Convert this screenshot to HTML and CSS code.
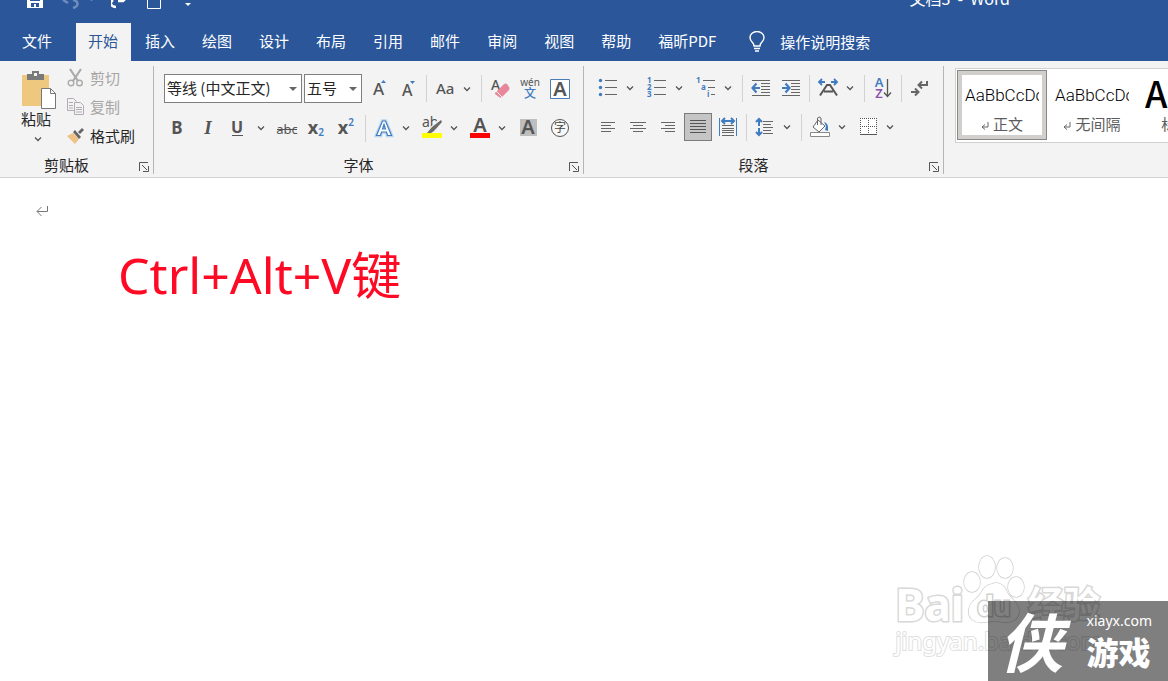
FILE: index.html
```html
<!DOCTYPE html>
<html lang="zh-CN">
<head>
<meta charset="utf-8">
<title>文档3 - Word</title>
<link rel="stylesheet" href="styles.css">
</head>
<body>
<svg class="defs" aria-hidden="true">
  <symbol id="chev" viewBox="0 0 16 28"><path d="M5 12.500l3 3 3-3" fill="none" stroke="#555" stroke-width="1.300"/></symbol>
  <symbol id="launch" viewBox="0 0 10 10"><path d="M.5 9V.5H9M3 3l5 5M9.500 4v5.500H4" fill="none" stroke="#555"/></symbol>
</svg>

<header class="titlebar">
  <div class="quick">
    <button aria-label="保存"><svg width="18" height="12"><path d="M0 0h16v8H0z" fill="#fff"/><path d="M3 0h10v1H3zM4 3h8v4H4z" fill="#2b579a"/><path d="M7 4h2v3H7z" fill="#fff"/></svg></button>
    <button aria-label="撤消"><svg width="34" height="12"><path d="M2 0l5 3M12 0c6 1 6 6 0 8" fill="none" stroke="#6d8dbf" stroke-width="2.500"/><path d="M29 0h3l-1.500 1z" fill="#6d8dbf"/></svg></button>
    <button aria-label="恢复"><svg width="20" height="12"><path d="M2 0c-4 3-2 7 3 7M7 1h5l2-2" fill="none" stroke="#fff" stroke-width="2.500"/></svg></button>
    <button aria-label="新建"><svg width="16" height="12"><path d="M.5 0v8.500h13V0" fill="none" stroke="#fff"/></svg></button>
    <button aria-label="自定义"><svg width="14" height="12"><path d="M6 3h6L9 6z" fill="#fff"/></svg></button>
  </div>
  <div class="doc-title">文档3&nbsp; -&nbsp; Word</div>
</header>

<nav class="tabs">
  <button class="tab file">文件</button>
  <button class="tab active">开始</button>
  <button class="tab">插入</button>
  <button class="tab">绘图</button>
  <button class="tab">设计</button>
  <button class="tab">布局</button>
  <button class="tab">引用</button>
  <button class="tab">邮件</button>
  <button class="tab">审阅</button>
  <button class="tab">视图</button>
  <button class="tab">帮助</button>
  <button class="tab">福昕PDF</button>
  <button class="tell"><svg width="16" height="22" fill="none" stroke="#fff" stroke-width="1.400"><path d="M5 15c0-4-4-4-4-8.500a7 6 0 0 1 14 0C15 11 11 11 11 15zM5 17.500h6M6 20h4"/></svg>操作说明搜索</button>
</nav>

<section class="ribbon">
  <div class="group clipboard">
    <div class="clip-body">
      <button class="paste">
        <svg width="36" height="40"><path d="M1 5h27v31H1z" fill="#edc87e"/><path d="M6 4h5V1h7v3h5v6H6z" fill="#7a7a7a"/><path d="M13 3h3v3h-3z" fill="#f3f3f3"/><path d="M20.500 18.500h9l5 5v15h-14z" fill="#fff" stroke="#777"/><path d="M29.500 18.500v5h5" fill="none" stroke="#777"/></svg>
        <span>粘贴</span>
        <svg width="16" height="20" viewBox="0 4 16 20"><use href="#chev" width="16" height="28"/></svg>
      </button>
      <div class="clip-list">
        <button class="line off"><svg width="18" height="20" fill="none" stroke="#aaa"><path d="M3 1l8 12M14 1L6 13" stroke-width="2.200"/><circle cx="4" cy="15" r="2.800" stroke-width="1.400"/><circle cx="12.500" cy="15" r="2.800" stroke-width="1.400"/></svg>剪切</button>
        <button class="line off"><svg width="18" height="20" fill="#f3f3f3" stroke="#b3abb3"><path d="M.5 1.500h6l3 3v9h-9zM2 5.500h4M2 8.500h4M2 11h4"/><path d="M7.500 5.500h6l3 3v9h-9zM9 10.500h6M9 12.500h6M9 15h6"/></svg>复制</button>
        <button class="line"><svg width="18" height="20"><path d="M0 10l6-3 6 6-4 5z" fill="#edc284"/><path d="M6 6l2-2 6 7-2 2zM11 6l4-4 2 2-4 4z" fill="#666"/></svg>格式刷</button>
      </div>
    </div>
    <div class="foot"><span>剪贴板</span><button aria-label="剪贴板选项"><svg width="10" height="10"><use href="#launch"/></svg></button></div>
  </div>

  <div class="group font">
    <div class="body">
      <div class="row">
        <div class="combos">
          <label class="combo name"><select aria-label="字体"><option>等线 (中文正文)</option></select></label>
          <label class="combo size"><select aria-label="字号"><option>五号</option></select></label>
        </div>
        <div class="cluster tight">
          <button aria-label="增大字号"><svg viewBox="0 0 28 28"><text x="7" y="20" class="g17">A</text><path d="M15 8l2.500-3L20 8z" fill="#3f7cbf"/></svg></button>
          <button aria-label="减小字号"><svg viewBox="0 0 28 28"><text x="8" y="21" class="g16">A</text><path d="M16 6h5l-2.500 3z" fill="#3f7cbf"/></svg></button>
        </div>
        <i class="sep"></i>
        <div class="split"><button aria-label="更改大小写"><svg viewBox="0 0 28 28"><text x="5" y="19" class="g15">Aa</text></svg></button><button class="dd" aria-label="更多"><svg><use href="#chev"/></svg></button></div>
        <i class="sep"></i>
        <div class="cluster">
          <button aria-label="清除格式"><svg viewBox="0 0 28 28"><text x="5" y="15" class="g14">A</text><path d="M9 18l9-9q1.500-1 3 0l2 3q1 1.500 0 3l-7 7q-2 1-3 0l-4-3z" fill="#e8879a"/><path d="M10 16l6 6" stroke="#f3f3f3"/></svg></button>
          <button aria-label="拼音指南"><svg viewBox="0 0 28 28"><text x="14" y="11" class="t10">wén</text><text x="14" y="23" class="c11">文</text></svg></button>
          <button aria-label="字符边框"><svg viewBox="0 0 28 28"><path d="M4.500 4.500h19v19h-19z" fill="#fff" stroke="#4a7db5"/><text x="14" y="21" class="b19">A</text></svg></button>
        </div>
      </div>
      <div class="row second">
        <div class="cluster">
          <button aria-label="加粗"><svg viewBox="0 0 28 28"><text x="14" y="20" class="b16">B</text></svg></button>
          <button aria-label="倾斜"><svg viewBox="0 0 28 28"><text x="15" y="20" class="ital">I</text></svg></button>
          <button aria-label="下划线"><svg viewBox="0 0 28 28"><text x="14" y="19" class="b15">U</text><path d="M9 21.500h11" stroke="#555"/></svg></button>
          <button class="dd" aria-label="更多"><svg><use href="#chev"/></svg></button>
        </div>
        <div class="cluster">
          <button aria-label="删除线"><svg viewBox="0 0 28 28"><text x="14" y="20" class="t13">abc</text><path d="M4 15.500h20" stroke="#555"/></svg></button>
          <button aria-label="下标"><svg viewBox="0 0 28 28"><text x="10" y="20" class="b17">x</text><text x="18" y="22" class="s9">2</text></svg></button>
          <button aria-label="上标"><svg viewBox="0 0 28 28"><text x="10" y="20" class="b17">x</text><text x="18" y="12" class="s9">2</text></svg></button>
        </div>
        <i class="sep"></i>
        <div class="split"><button aria-label="文本效果"><svg viewBox="0 0 28 28"><path d="M6.500 21.500L12.500 7h3l6 14.500h-4l-1-3.500h-5l-1 3.500zM12.500 15h3L14 10.500z" fill="#fff" stroke="#b8d6f0" stroke-width="3.500"/><path d="M6.500 21.500L12.500 7h3l6 14.500h-4l-1-3.500h-5l-1 3.500zM12.500 15h3L14 10.500z" fill="#fff" stroke="#3f7cbf" stroke-width="1.200"/></svg></button><button class="dd" aria-label="更多"><svg><use href="#chev"/></svg></button></div>
        <div class="split"><button aria-label="突出显示"><svg viewBox="0 0 28 28"><text x="4" y="13" class="t12s">ab</text><path d="M21.500 7.500l-9 9" stroke="#f3f3f3" stroke-width="5"/><path d="M23 6l-9 7-5 6h4l3-2 8-9z" fill="#6a6a6a"/><path d="M4 19h20v5H4z" fill="#ff0"/></svg></button><button class="dd" aria-label="更多"><svg><use href="#chev"/></svg></button></div>
        <div class="split"><button aria-label="字体颜色"><svg viewBox="0 0 28 28"><text x="14" y="18" class="b19">A</text><path d="M4 19h20v5H4z" fill="red"/></svg></button><button class="dd" aria-label="更多"><svg><use href="#chev"/></svg></button></div>
        <button aria-label="字符底纹"><svg viewBox="0 0 28 28"><path d="M6 5h17v17H6z" fill="#bebebe"/><text x="14" y="20" class="b19">A</text></svg></button>
        <button aria-label="带圈字符"><svg viewBox="0 0 28 28"><circle cx="14" cy="14" r="8.500" fill="#f8f8f8" stroke="#555"/><text x="14" y="18" class="c11 dark">字</text></svg></button>
      </div>
    </div>
    <div class="foot"><span>字体</span><button aria-label="字体选项"><svg width="10" height="10"><use href="#launch"/></svg></button></div>
  </div>

  <div class="group para">
    <div class="body">
      <div class="row">
        <div class="cluster lists">
          <div class="split"><button aria-label="项目符号"><svg viewBox="0 0 28 28"><path d="M11 6.500h12M11 13.500h12M11 20.500h12" stroke="#666"/><g fill="#3f7cbf"><circle cx="6.500" cy="6.500" r="1.700"/><circle cx="6.500" cy="13.500" r="1.700"/><circle cx="6.500" cy="20.500" r="1.700"/></g></svg></button><button class="dd" aria-label="更多"><svg><use href="#chev"/></svg></button></div>
          <div class="split"><button aria-label="编号"><svg viewBox="0 0 28 28"><path d="M11 6.500h12M11 13.500h12M11 20.500h12" stroke="#666"/><text x="4" y="9" class="n7">1</text><text x="4" y="16" class="n7">2</text><text x="4" y="23" class="n7">3</text></svg></button><button class="dd" aria-label="更多"><svg><use href="#chev"/></svg></button></div>
          <div class="split"><button aria-label="多级列表"><svg viewBox="0 0 28 28"><path d="M11 6.500h12M16 13.500h7M19 20.500h4" stroke="#666"/><text x="4" y="9" class="n7">1</text><text x="9" y="16" class="n7">a</text><text x="15" y="23" class="n7">i</text></svg></button><button class="dd" aria-label="更多"><svg><use href="#chev"/></svg></button></div>
        </div>
        <i class="sep"></i>
        <div class="cluster">
          <button aria-label="减少缩进"><svg viewBox="0 0 28 28"><path d="M5 6.500h18M14 9.500h9M14 12.500h9M14 15.500h9M14 18.500h9M5 21.500h18" stroke="#666"/><path d="M13 14H6M9.500 9.500L5.500 14l4 4.500" fill="none" stroke="#3f7cbf" stroke-width="2.200"/></svg></button>
          <button aria-label="增加缩进"><svg viewBox="0 0 28 28"><path d="M5 6.500h18M14 9.500h9M14 12.500h9M14 15.500h9M14 18.500h9M5 21.500h18" stroke="#666"/><path d="M5 14h7M8.500 9.500l4 4.500-4 4.500" fill="none" stroke="#3f7cbf" stroke-width="2.200"/></svg></button>
        </div>
        <i class="sep"></i>
        <div class="split"><button aria-label="中文版式"><svg viewBox="0 0 28 28"><path d="M6 21.500L13 11h3l7 10.500M10 17.500h9" fill="none" stroke="#555" stroke-width="2"/><path d="M5 8h6M8 5L5 8l3 3M17 8h6M20 5l3 3-3 3" fill="none" stroke="#3f7cbf" stroke-width="1.800"/></svg></button><button class="dd" aria-label="更多"><svg><use href="#chev"/></svg></button></div>
        <i class="sep"></i>
        <button aria-label="排序"><svg viewBox="0 0 28 28"><text x="10" y="13" class="az">A</text><text x="10" y="24" class="az z">Z</text><path d="M18.500 5v17M15 18.500l3.500 4 3.500-4" fill="none" stroke="#555" stroke-width="1.300"/></svg></button>
        <i class="sep"></i>
        <button aria-label="显示编辑标记"><svg viewBox="0 0 28 28" fill="none" stroke="#666" stroke-width="2"><path d="M21 7v4h-8M16 7.500L12.500 11l3.500 3.500M5 18h7M9 14.500l3.500 3.500L9 21.500"/></svg></button>
      </div>
      <div class="row second">
        <div class="cluster">
          <button aria-label="左对齐"><svg viewBox="0 0 28 28"><path d="M7 9.500h14M7 12.500h10M7 15.500h14M7 18.500h10" stroke="#666"/></svg></button>
          <button aria-label="居中"><svg viewBox="0 0 28 28"><path d="M6 9.500h16M9 12.500h10M6 15.500h16M9 18.500h10" stroke="#666"/></svg></button>
          <button aria-label="右对齐"><svg viewBox="0 0 28 28"><path d="M7 9.500h14M11 12.500h10M7 15.500h14M11 18.500h10" stroke="#666"/></svg></button>
          <button class="on" aria-label="两端对齐"><svg viewBox="0 0 28 28"><path d="M6 7.500h16M6 10.500h16M6 13.500h16M6 16.500h16M6 19.500h16" stroke="#555"/></svg></button>
          <button aria-label="分散对齐"><svg viewBox="0 0 28 28"><path d="M5.500 5v18M22.500 5v18" stroke="#3f7cbf"/><path d="M8 12.500h12M8 15.500h12M8 17.500h12M8 19.500h12M8 22.500h12" stroke="#666"/><path d="M8 8h12M11 5L8 8l3 3M17 5l3 3-3 3" fill="none" stroke="#3f7cbf" stroke-width="2"/></svg></button>
        </div>
        <i class="sep"></i>
        <div class="split"><button aria-label="行距"><svg viewBox="0 0 28 28"><path d="M12 8.500h10M12 11.500h8M12 14.500h10M12 17.500h8M12 20.500h10" stroke="#666"/><path d="M8 6v7M5 9l3-3 3 3M8 15v7M5 19l3 3 3-3" fill="none" stroke="#3f7cbf" stroke-width="2"/></svg></button><button class="dd" aria-label="更多"><svg><use href="#chev"/></svg></button></div>
        <i class="sep"></i>
        <div class="split"><button aria-label="底纹"><svg viewBox="0 0 28 28"><path d="M12 7l7 6-6 6-6-5z" fill="#fff" stroke="#666"/><path d="M11.500 12V5q1.500-2 3.500 0v7" fill="none" stroke="#666"/><path d="M18 9q5 1 4 9l-3-1 1-4z" fill="#3f7cbf"/><path d="M4.500 19.500h19v4h-19z" fill="#fff" stroke="#888"/></svg></button><button class="dd" aria-label="更多"><svg><use href="#chev"/></svg></button></div>
        <div class="split"><button aria-label="边框"><svg viewBox="0 0 28 28"><path d="M6 5h16v16H6z" fill="#fff"/><path d="M6 5.500h17M6 13.500h17M6.500 5v17M14.500 5v17M22.500 5v17" stroke="#555" stroke-dasharray="1 1"/><path d="M6 21.500h17" stroke="#555"/></svg></button><button class="dd" aria-label="更多"><svg><use href="#chev"/></svg></button></div>
      </div>
    </div>
    <div class="foot"><span>段落</span><button aria-label="段落选项"><svg width="10" height="10"><use href="#launch"/></svg></button></div>
  </div>

  <div class="styles">
    <div class="gallery">
      <button class="style chosen"><span class="sample">AaBbCcDc</span><span class="cap"><svg width="8" height="9"><path d="M7 0v5H1M4 2.500L1 5l3 2.500" fill="none" stroke="#666"/></svg>正文</span></button>
      <button class="style"><span class="sample">AaBbCcDc</span><span class="cap"><svg width="8" height="9"><path d="M7 0v5H1M4 2.500L1 5l3 2.500" fill="none" stroke="#666"/></svg>无间隔</span></button>
      <button class="style"><span class="sample head">AaB</span><span class="cap">标题 1</span></button>
    </div>
  </div>
</section>

<main class="page">
  <svg class="mark" width="13" height="12" fill="none" stroke="#777"><path d="M11.500 1v5.500H1M5.500 2L1 6.500 5.500 11"/></svg>
  <p class="hint">Ctrl+Alt+V键</p>

  <div class="baidu">
    <div class="brand">
      <span class="bai">Bai</span>
      <svg width="64" height="70" fill="#fff" stroke="#d0d0d0" stroke-width="1.500"><ellipse cx="10" cy="27" rx="8" ry="10"/><ellipse cx="25" cy="12" rx="8" ry="11"/><ellipse cx="43" cy="13" rx="8" ry="10"/><ellipse cx="54" cy="32" rx="8" ry="10"/><path d="M30 29c7-3 13 2 15 8 3 7 12 10 12 19 0 8-7 12-15 11-7-1-12-1-19 0C13 69 5 63 7 54c1-8 9-10 12-16 3-5 5-8 11-9z"/><text x="32" y="61" class="du">du</text></svg>
      <span class="jy">经验</span>
    </div>
    <div class="url">jingyan.baidu.com</div>
  </div>
  <div class="xia">
    <span class="logo">侠</span>
    <div class="xia-text"><span class="site">xiayx.com</span><span class="games">游戏</span></div>
  </div>
</main>
</body>
</html>
```

FILE: styles.css
```css
* { box-sizing: border-box; }
body {
  margin: 0;
  min-height: 100vh;
  display: flex;
  flex-direction: column;
  overflow: hidden;
  background: #fff;
  color: #262626;
  font: 15px/20px "Noto Sans CJK SC", sans-serif;
}
button {
  display: block;
  margin: 0;
  padding: 0;
  border: 0;
  background: none;
  color: inherit;
  font: inherit;
  white-space: nowrap;
}
svg { display: block; flex: none; }
.defs { display: none; }

.titlebar {
  display: flex;
  align-items: flex-start;
  justify-content: space-between;
  height: 23px;
  padding: 0 158px 0 27px;
  overflow: hidden;
  background: #2b579a;
  color: #fff;
}
.quick { display: flex; gap: 16px; }
.doc-title { margin-top: -12px; font-size: 16px; white-space: nowrap; }

.tabs {
  display: flex;
  gap: 2px;
  height: 38px;
  padding-left: 10px;
  background: #2b579a;
  color: #fff;
}
.tab { padding: 0 13px 2px 12px; }
.tab.file { margin-right: 9px; }
.tab.active { background: #f3f3f3; color: #2b579a; }
.tell { display: flex; align-items: center; gap: 15px; margin-left: 18px; }

.ribbon {
  display: flex;
  padding: 5px 0 3px;
  background: #f3f3f3;
  border-bottom: 1px solid #d2d2d2;
}
.group {
  display: flex;
  flex: none;
  flex-direction: column;
  justify-content: space-between;
  border-right: 1px solid #b5b5b5;
}
.clipboard { width: 154px; }
.font { width: 430px; }
.para { width: 360px; }
.body { padding: 8px 0 0 9px; }
.row { display: flex; align-items: center; gap: 4px; }
.row.second { margin-top: 11px; }
.cluster { display: flex; gap: 2px; }
.cluster.tight { gap: 0; }
.cluster.lists { gap: 5px; }
.para .body { padding-left: 10px; }
.split { display: flex; }
.row button { width: 28px; height: 28px; }
.row button svg { width: 100%; height: 100%; overflow: visible; }
.row .dd { width: 16px; }
.row .on { background: #c5c5c5; outline: 1px solid #7b7b7b; outline-offset: -1px; }
.sep { width: 1px; height: 27px; background: #d2d2d2; }
.split + .sep, .lists + .sep { margin-left: 2px; }

.combos { display: flex; gap: 2px; padding-left: 1px; }
.combo { position: relative; }
.combo.name { width: 138px; }
.combo.size { width: 58px; }
.combo select {
  display: block;
  width: 100%;
  height: 29px;
  margin: 0;
  padding: 0 2px 2px;
  border: 1px solid #7f7f7f;
  border-radius: 0;
  background: #fff;
  color: #262626;
  font: inherit;
  appearance: none;
}
.combo::after {
  content: "";
  position: absolute;
  right: 5px;
  top: 13px;
  border: 4px solid transparent;
  border-top-color: #666;
  border-bottom: 0;
}

.foot { display: flex; align-items: center; height: 18px; }
.foot span { flex: 1; text-align: center; }
.foot button { width: 20px; padding: 3px 4px 0 6px; }

.clip-body { display: flex; height: 90px; padding-left: 14px; gap: 9px; }
.paste { display: flex; flex-direction: column; align-items: center; width: 44px; padding-top: 4px; }
.paste svg:first-child { margin-left: 6px; }
.paste span { margin-top: -1px; }
.paste svg:last-child { margin-left: 4px; }
.clip-list { display: flex; flex-direction: column; gap: 9px; padding-top: 2px; }
.line { display: flex; align-items: center; gap: 5px; }
.line.off { color: #a6a6a6; }

.styles { flex: 1; min-width: 0; padding: 2px 0 0 11px; }
.gallery {
  display: flex;
  height: 75px;
  padding: 1px;
  overflow: hidden;
  background: #fff;
  border: 1px solid #d0d0d0;
  border-right: 0;
}
.style { flex: none; width: 90px; height: 70px; padding: 5px 8px; border: 0; }
.chosen { padding: 4px 7px; border: 1px solid #8a8886; box-shadow: inset 0 0 0 4px #d0cfcc; }
.sample { display: block; height: 38px; overflow: hidden; color: #000; font: 300 17px/38px Roboto, sans-serif; text-align: left; }
.sample.head { font: 500 36px/32px "Noto Sans CJK SC", sans-serif; }
.cap { display: flex; align-items: center; justify-content: center; gap: 4px; color: #5c5c5c; }
.cap svg { margin-top: 5px; }

.g17, .g16, .g15, .g14, .t10, .t12s, .t13, .b15, .b16, .b17, .b19, .s9, .n7, .az { font-family: "Noto Sans", sans-serif; fill: #555; }
.g17 { font-size: 17px; font-weight: 500; }
.g16 { font-size: 16px; font-weight: 500; }
.g15 { font-size: 15px; font-weight: 500; }
.g14 { font-size: 14px; font-weight: 500; }
.t10 { font-size: 10px; text-anchor: middle; }
.t12s { font-size: 14px; }
.t13 { font-size: 13px; text-anchor: middle; }
.b15, .b16, .b17, .b19 { font-weight: 700; text-anchor: middle; }
.b15 { font-size: 16px; }
.b16 { font-size: 17px; }
.b17 { font-size: 18px; }
.b19 { font-size: 20px; font-weight: 600; }
.s9 { font-size: 10px; font-weight: 600; text-anchor: middle; fill: #3f7cbf; }
.n7 { font-size: 8px; font-weight: 700; fill: #3f7cbf; }
.c11 { font-size: 12px; font-weight: 500; text-anchor: middle; fill: #3f7cbf; }
.c11.dark { fill: #444; font-weight: 400; }
.ital { font: italic bold 19px "Liberation Serif", serif; text-anchor: middle; fill: #555; }
.az { font-size: 13px; font-weight: 600; text-anchor: middle; fill: #3f7cbf; }
.az.z { fill: #8f4fae; }

.page { position: relative; flex: 1; overflow: hidden; padding: 27px 36px; }
.hint {
  margin: 24px 0 0 82px;
  color: #ff0a24;
  font: 50px/68px "Noto Sans", "Noto Sans CJK SC", sans-serif;
}
.baidu {
  position: absolute;
  right: 65px;
  bottom: 24px;
  color: #fff;
  font-family: "Noto Sans", "Noto Sans CJK SC", sans-serif;
  font-weight: 700;
  -webkit-text-stroke: 3px #d8d8d8;
  paint-order: stroke fill;
}
.brand { display: flex; align-items: flex-end; }
.bai { font-size: 44px; line-height: 42px; }
.brand svg { margin: 0 2px 0 -2px; }
.jy { font-size: 36px; line-height: 40px; }
.du { font-size: 26px; text-anchor: middle; stroke-width: 3px; paint-order: stroke fill; }
.url { font-size: 24px; line-height: 32px; font-weight: 400; text-align: right; -webkit-text-stroke: 2px #e0e0e0; }
.xia {
  position: absolute;
  right: 0;
  bottom: 0;
  display: flex;
  align-items: center;
  justify-content: space-between;
  width: 180px;
  height: 80px;
  padding: 0 16px 0 11px;
  background: rgba(0, 0, 0, .5);
  color: #fff;
}
.logo { font-size: 64px; font-style: italic; font-weight: 700; line-height: 76px; padding-bottom: 4px; }
.xia-text { display: flex; flex-direction: column; }
.site { font: 14px/20px "Noto Sans", sans-serif; }
.games { font-size: 32px; font-weight: 900; line-height: 40px; }
```
